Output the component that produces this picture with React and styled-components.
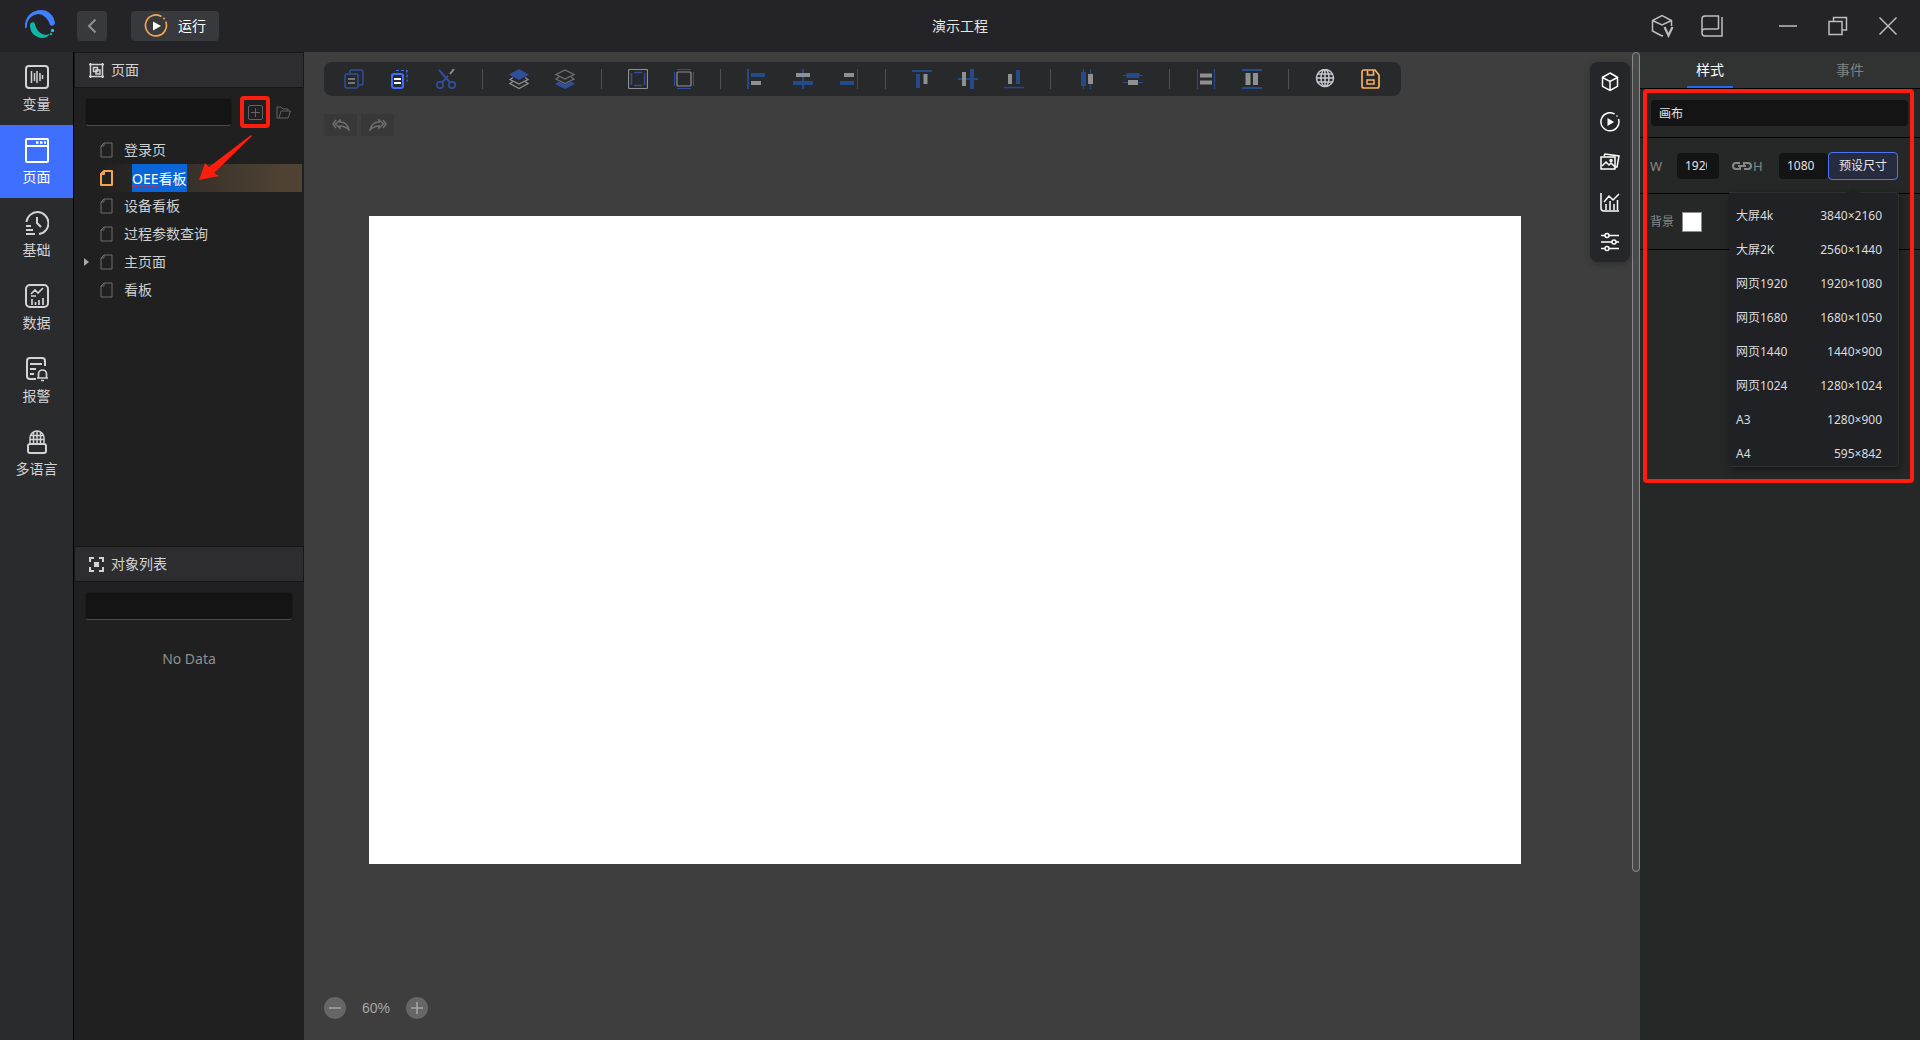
import React, { useState } from "react";
import styled, { createGlobalStyle, css } from "styled-components";

const GlobalStyle = createGlobalStyle`
  *, *::before, *::after { box-sizing: border-box; }
  html, body, #root { height: 100%; }
  body {
    margin: 0;
    background: #3e3e3e;
    color: #d6d6d6;
    font-family: "Noto Sans", "Noto Sans CJK SC", sans-serif;
    font-size: 14px;
    line-height: 20px;
    overflow: hidden;
  }
  button, input { font: inherit; color: inherit; margin: 0; padding: 0; border: 0; }
  button { background: none; cursor: pointer; }
  svg { display: block; flex: none; }
`;

/* ---------- shell ---------- */
const Shell = styled.div`
  display: flex;
  flex-direction: column;
  height: 100vh;
`;
const Header = styled.header`
  display: grid;
  grid-template-columns: 1fr auto 1fr;
  align-items: center;
  flex: none;
  height: 52px;
  padding: 0 16px;
  background: #242428;
`;
const HeaderStart = styled.div`
  display: flex;
  align-items: center;
  gap: 24px;
  padding-left: 8px;
  & > svg { margin-right: -3px; }
`;
const Title = styled.h1`
  margin: 0;
  font-size: 14px;
  font-weight: 400;
  color: #e4e4e4;
`;
const HeaderEnd = styled.div`
  display: flex;
  justify-content: flex-end;
  gap: 18px;
  color: #bdbdbf;
`;
const WindowButtons = styled.div`
  display: flex;
  gap: 18px;
  margin-left: 26px;
`;
const IconButton = styled.button`
  display: grid;
  place-items: center;
  width: 32px;
  height: 32px;
`;
const HeaderButton = styled.button`
  display: flex;
  align-items: center;
  justify-content: center;
  gap: 10px;
  height: 30px;
  min-width: 30px;
  padding: ${(p) => (p.$wide ? "0 13px" : "0")};
  border-radius: 4px;
  background: #38393d;
  color: ${(p) => (p.$wide ? "#fff" : "#8f8f91")};
`;
const Body = styled.div`
  display: flex;
  flex: 1;
  min-height: 0;
`;

/* ---------- left navigation ---------- */
const Nav = styled.nav`
  display: flex;
  flex-direction: column;
  flex: none;
  width: 74px;
  background: #2a2b2d;
  border-right: 1px solid #000;
`;
const NavItem = styled.button`
  display: flex;
  flex-direction: column;
  align-items: center;
  gap: 4px;
  height: 73px;
  padding-top: 13px;
  color: ${(p) => (p.$active ? "#fff" : "#d3d3d3")};
  background: ${(p) => (p.$active ? "#3f6fff" : "transparent")};
`;

/* ---------- side panel ---------- */
const Side = styled.aside`
  display: flex;
  flex-direction: column;
  flex: none;
  width: 230px;
  background: #202020;
`;
const SideSection = styled.section`
  display: flex;
  flex-direction: column;
  flex: ${(p) => (p.$grow ? "1" : "0 0 50%")};
`;
const SideTitle = styled.h2`
  display: flex;
  align-items: center;
  gap: 7px;
  flex: none;
  height: 36px;
  margin: 0;
  padding: 0 14px;
  border: 1px solid #171717;
  background: #2d2d2f;
  color: #d3d3d3;
  font-size: 14px;
  font-weight: 400;
`;
const SearchRow = styled.div`
  display: flex;
  align-items: center;
  gap: 8px;
  padding: 10px 11px 0;
`;
const SearchInput = styled.input`
  flex: 1;
  min-width: 0;
  height: 28px;
  padding: 0 8px;
  border: 1px solid #1b1b1b;
  border-bottom-color: #4a4a4a;
  border-radius: 4px;
  background: #141414;
  outline: none;
`;
const SmallButton = styled.button`
  display: grid;
  place-items: center;
  width: ${(p) => (p.$marked ? "30px" : "20px")};
  height: ${(p) => (p.$marked ? "32px" : "20px")};
  margin: ${(p) => (p.$marked ? "-2px -5px -2px 0" : "0")};
  border: ${(p) => (p.$marked ? "4px solid #ff1d0d" : "0")};
  border-radius: 4px;
  color: #626262;
`;
const Tree = styled.ul`
  position: relative;
  margin: 10px 0 0;
  padding: 0 2px 0 0;
  list-style: none;
`;
const TreeRow = styled.li`
  display: flex;
  align-items: center;
  gap: 11px;
  height: 28px;
  padding-left: 10px;
  ${(p) => p.$active && css`
    background: linear-gradient(90deg, #202020 10%, #4f4233 92%);
  `}
`;
const Caret = styled.span`
  width: 5px;
  height: 8px;
  background: ${(p) => (p.$shown ? "#a8a8a8" : "transparent")};
  clip-path: polygon(0 0, 100% 50%, 0 100%);
`;
const TreeLabel = styled.button`
  text-align: left;
  color: #cfcfcf;
`;
const TreeEdit = styled.input`
  width: 55px;
  height: 28px;
  margin-left: 8px;
  outline: none;
  color: #fff;
  background: #0a66d8;
`;
const EditWrap = styled.label`
  position: relative;
  display: flex;
  & > svg { position: absolute; left: 8px; bottom: 4px; }
`;
const Arrow = styled.svg`
  position: absolute;
  left: 123px;
  top: -1px;
  pointer-events: none;
`;
const Empty = styled.p`
  margin: 29px 0 0;
  text-align: center;
  color: #8e9094;
`;

/* ---------- stage ---------- */
const Stage = styled.main`
  display: flex;
  flex-direction: column;
  flex: 1;
  min-width: 0;
  position: relative;
  padding: 10px 0 21px 20px;
`;
const Toolbar = styled.div`
  display: flex;
  align-items: center;
  align-self: flex-start;
  flex: none;
  height: 34px;
  padding: 0 7px;
  border-radius: 8px;
  background: #28292b;
`;
const Tool = styled.button`
  display: grid;
  place-items: center;
  width: 46px;
  height: 34px;
`;
const Divider = styled.span`
  width: 1px;
  height: 20px;
  margin: 0 13px;
  background: #505153;
`;
const History = styled.div`
  display: flex;
  gap: 4px;
  flex: none;
  margin-top: 18px;
`;
const HistoryButton = styled.button`
  display: grid;
  place-items: center;
  width: 33px;
  height: 22px;
  background: #383838;
  color: #6e6e6e;
`;
const Viewport = styled.div`
  display: flex;
  flex: 1;
  min-height: 0;
  align-items: center;
  padding: 0 111px 0 45px;
  margin-bottom: 54px;
`;
const Canvas = styled.div`
  width: 100%;
  aspect-ratio: 16 / 9;
  background: #fff;
`;
const Zoom = styled.div`
  display: flex;
  align-items: center;
  gap: 16px;
  flex: none;
  color: #a6a6a6;
  font-family: "Liberation Sans", Arial, sans-serif;
`;
const ZoomButton = styled.button`
  display: grid;
  place-items: center;
  width: 22px;
  height: 22px;
  border-radius: 50%;
  background: #666;
`;
const Dock = styled.div`
  position: absolute;
  top: 10px;
  right: 2px;
  display: flex;
  flex-direction: column;
  border-radius: 8px;
  background: #25262a;
  color: #fff;
  box-shadow: 0 2px 6px rgba(0, 0, 0, 0.25);
`;
const DockButton = styled.button`
  display: grid;
  place-items: center;
  width: 40px;
  height: 40px;
`;
const Thumb = styled.div`
  flex: none;
  width: 8px;
  height: 83%;
  border: 1px solid #8a8a8a;
  border-radius: 4px;
  background: #4a4a4a;
`;

/* ---------- property panel ---------- */
const Props = styled.aside`
  position: relative;
  flex: none;
  width: 280px;
  background: #262827;
`;
const Tabs = styled.div`
  display: flex;
  height: 37px;
  background: #313332;
  border-bottom: 1px solid #000;
`;
const Tab = styled.button`
  display: flex;
  flex: 1;
  justify-content: center;
  align-items: stretch;
  color: ${(p) => (p.$active ? "#fff" : "#808281")};
  & > span {
    padding: 8px 9px 0;
    border-bottom: 2px solid ${(p) => (p.$active ? "#2468f2" : "transparent")};
  }
`;
const Group = styled.div`
  display: flex;
  align-items: center;
  height: ${(p) => (p.$first ? "49px" : "56px")};
  padding: ${(p) => (p.$first ? "0 12px 0 11px" : "0 22px 0 10px")};
  border-bottom: 1px solid #000;
  font-size: 12px;
  color: #858786;
`;
const Field = styled.input`
  flex: ${(p) => (p.$size ? "0 0 " + p.$size : "1")};
  min-width: 0;
  height: 26px;
  padding: 0 12px 0 8px;
  border-radius: 4px;
  background: #141414;
  color: #e2e2e2;
  outline: none;
`;
const Label = styled.label`
  flex: ${(p) => (p.$size ? "0 0 " + p.$size : "none")};
  display: flex;
  align-items: center;
  font-size: ${(p) => (p.$large ? "13px" : "12px")};
`;
const PresetWrap = styled.div`
  position: relative;
  flex: none;
  width: 70px;
`;
const PresetButton = styled.button`
  width: 100%;
  height: 28px;
  border: 1px solid #4a76f5;
  border-radius: 4px;
  background: #262b3f;
  color: #e6e6e6;
`;
const Menu = styled.ul`
  position: absolute;
  z-index: 1;
  top: 40px;
  right: -1px;
  display: grid;
  gap: 10px;
  width: 170px;
  margin: 0;
  padding: 11px 0 0;
  list-style: none;
  background: #202124;
  border: solid #2f3032;
  border-width: 1px 1px 1px 0;
  border-radius: 0 4px 4px 0;
  box-shadow: 2px 3px 8px rgba(0, 0, 0, 0.4);
  &::before {
    content: "";
    position: absolute;
    top: -5px;
    right: 38px;
    border: solid transparent;
    border-width: 0 7px 5px;
    border-bottom-color: #202124;
  }
`;
const MenuItem = styled.button`
  display: flex;
  justify-content: space-between;
  align-items: center;
  width: 100%;
  height: 24px;
  padding: 0 16px 0 7px;
  color: #dcdcdc;
  font-size: 12px;
`;
const Swatch = styled.input`
  appearance: none;
  width: 20px;
  height: 20px;
  border: 1px solid #8c8c8c;
  background: #fff;
  &::-webkit-color-swatch-wrapper { padding: 0; }
  &::-webkit-color-swatch { border: 0; }
`;
const Highlight = styled.div`
  position: absolute;
  z-index: 2;
  top: 37px;
  left: 3px;
  right: 6px;
  height: 394px;
  border: 4px solid #ff1d0d;
  border-radius: 4px;
  pointer-events: none;
`;

/* ---------- drawings ---------- */
const B = "#304e9c";
const D = "#254a8c";
const G = "#8f9090";

const Svg = ({ s = 24, w = s, h = s, sw = 2, children, ...rest }) => (
  <svg width={w} height={h} viewBox={`0 0 ${w} ${h}`} fill="none" stroke="currentColor" strokeWidth={sw} aria-hidden="true" {...rest}>
    {children}
  </svg>
);

const Logo = () => (
  <Svg s={32} strokeLinecap="round">
    <path d="M1 18C0 6 9 0 17 0c8 0 13 6 14 13a3 3 0 0 1-5 2C24 8 19 4 14 4 8 5 3 9 3 16c0 1-1 3-2 2z" fill="#3f80ff" stroke="none" />
    <path d="M6 15c0-3 4-4 5-1 1 6 5 10 11 11l4-1c-3 5-10 5-14 2-4-2-6-6-6-11z" fill="#11b5a4" stroke="none" />
    <circle cx="28.500" cy="20.500" r="1.700" fill="#2ac0d4" stroke="none" />
    <circle cx="27" cy="24" r="1.200" fill="#11b5a4" stroke="none" />
  </Svg>
);
const Run = () => (
  <Svg s={24}>
    <path d="M17.500 2.500A10.500 10.500 0 1 0 21.700 7.500" stroke="#f2a354" strokeWidth="1.700" />
    <path d="M9 7.500v9l8-4.500z" fill="#fff" stroke="none" />
    <circle cx="20" cy="4.500" r="1" fill="#f2a354" stroke="none" />
  </Svg>
);

const navIcons = {
  vars: (
    <>
      <rect x="1" y="1" width="22" height="22" rx="3" />
      <path d="M6.500 6v12M9.500 8v8M12 6v12M15 8v8M17.500 10v4" strokeWidth="1.500" />
    </>
  ),
  pages: (
    <>
      <rect x="1" y="1" width="22" height="23" rx="1" />
      <path d="M1 8h22" />
      <path d="M11 4.500h2.500M15 4.500h2.500M19 4.500h2" strokeWidth="2.500" />
    </>
  ),
  base: (
    <>
      <path d="M1.500 11A11 11 0 1 1 14 23M12 6v6l4 4" />
      <path d="M1 15h5M1 19h7M1 23h9" />
    </>
  ),
  data: (
    <>
      <rect x="1" y="1" width="22" height="22" rx="4" />
      <path d="M6 10l4-4 3 3 5-5M6 12h5M7 21v-6M10.500 21v-3M14 21v-5M18 21v-7" strokeWidth="1.700" />
    </>
  ),
  alarm: (
    <>
      <path d="M11 22H5a3 3 0 0 1-3-3V4a3 3 0 0 1 3-3h12a3 3 0 0 1 3 3v5M5 7h12M5 12h6M5 17h4" />
      <path d="M12 21h11M13.500 21v-4a4 4 0 0 1 8 0v4M16 23.500h3" strokeWidth="1.700" />
    </>
  ),
  lang: (
    <>
      <path d="M5 13V8a7 7 0 0 1 14 0v5M5 5.500h14M5 9.500h14M12 1v12M8.500 2v11M15.500 2v11" strokeWidth="1.500" />
      <rect x="3" y="14" width="18" height="9" rx="2" />
    </>
  ),
};

const PageFile = ({ active }) => (
  <Svg w={13} h={16} sw={active ? 2 : 1} color={active ? "#f2a354" : "#6f6f6f"} strokeLinejoin="round">
    <path d="M4 1h8v14H1V4zM4 1v3H1" />
  </Svg>
);

const tools = [
  [
    ["复制", <><path d="M6 5V3a2 2 0 0 1 2-2h9a2 2 0 0 1 2 2v11a2 2 0 0 1-2 2h-2" stroke={B} strokeWidth="1.500" /><rect x="1" y="5" width="13" height="14" rx="2" stroke={B} strokeWidth="1.500" /><path d="M4 10h7M4 14h7" stroke={G} strokeWidth="1.500" /></>],
    ["粘贴", <><path d="M6 1.500h11v11" stroke="#3f6fff" strokeDasharray="3 2" /><rect x="2" y="5" width="11" height="14" rx="2" stroke="#3f6fff" strokeWidth="2" /><path d="M4 10h7M4 14h7" stroke="#fff" strokeWidth="2" /></>],
    ["剪切", <><path d="M3 1l11 12.500" stroke={B} strokeWidth="2" /><path d="M14 5l4-5" stroke={G} strokeWidth="2" /><path d="M12 7L6 13.500" stroke={B} strokeWidth="2" /><circle cx="4" cy="16" r="3.200" stroke={B} strokeWidth="1.700" /><circle cx="16" cy="16" r="3.200" stroke={B} strokeWidth="1.700" /></>],
  ],
  [
    ["置于顶层", <><path d="M0 5.500L10 0l10 5.500L10 11z" fill={B} stroke="none" /><path d="M4 8.500L1 10.500l9 4.500 9-4.500-3-2M4 12.500l-3 2 9 5 9-5-3-2" stroke={G} /></>],
    ["置于底层", <><path d="M1 5.500L10 1l9 4.500-9 4.500zM4 8L1 10l9 4.500 9-4.500-3-2" stroke="#6f7071" /><path d="M0 15l4-2.500 6 3 6-3 4 2.500-10 5z" fill={B} stroke="none" /></>],
  ],
  [
    ["组合", <><rect x="0.500" y="0.500" width="19" height="19" rx="1" stroke={G} /><path d="M6 3.500h8M6 16.500h8M3.500 4v12M16.500 4v12" stroke={B} strokeWidth="1.500" /></>],
    ["取消组合", <><rect x="3" y="3" width="14" height="14" rx="1" stroke={G} /><path d="M3 .5h14M3 19.500h14M.5 3v14M19.500 3v14" stroke={B} /></>],
  ],
  [
    ["左对齐", <><path d="M1 0v20" stroke={D} strokeWidth="2" /><path d="M4 6h14" stroke={D} strokeWidth="4" /><path d="M4 14h10" stroke={G} strokeWidth="4" /></>],
    ["水平居中", <><path d="M10 0v20" stroke={D} strokeWidth="2" /><path d="M0 14h20" stroke={D} strokeWidth="4" /><path d="M3 6h14" stroke={G} strokeWidth="4" /></>],
    ["右对齐", <><path d="M18.500 0v20" stroke={D} strokeWidth="1" /><path d="M1 14h14" stroke={D} strokeWidth="4" /><path d="M5 6h10" stroke={G} strokeWidth="4" /></>],
  ],
  [
    ["顶对齐", <><path d="M0 2h20" stroke={D} strokeWidth="2" /><path d="M6 5v14" stroke={D} strokeWidth="4" /><path d="M13.500 5v10" stroke={G} strokeWidth="4" /></>],
    ["垂直居中", <><path d="M0 10h20" stroke={D} strokeWidth="2" /><path d="M14 0v20" stroke={D} strokeWidth="4" /><path d="M6 3v14" stroke={G} strokeWidth="4" /></>],
    ["底对齐", <><path d="M0 18.500h20" stroke={D} strokeWidth="1.500" /><path d="M14 1v14" stroke={D} strokeWidth="4" /><path d="M6 5v10" stroke={G} strokeWidth="4" /></>],
  ],
  [
    ["水平分布", <><path d="M6.500 0v20M13.500 0v20" stroke={D} /><path d="M6.500 3v14" stroke={D} strokeWidth="5" /><path d="M13.500 5v10" stroke={G} strokeWidth="5" /></>],
    ["垂直分布", <><path d="M0 6.500h20M0 13.500h20" stroke={D} /><path d="M3.500 6.500h13" stroke={D} strokeWidth="5" /><path d="M5 13.500h10" stroke={G} strokeWidth="5" /></>],
  ],
  [
    ["等宽", <><path d="M1.500 0v20M18.500 0v20" stroke={D} /><path d="M4 6.500h12M4 13.500h12" stroke={G} strokeWidth="4" /></>],
    ["等高", <><path d="M0 1h20M0 19h20" stroke={D} strokeWidth="2" /><path d="M6 4v12M13.500 4v12" stroke={G} strokeWidth="5" /></>],
  ],
  [
    ["语言", <g stroke="#c6c9d0" strokeWidth="1.500"><circle cx="10" cy="9" r="8.500" /><ellipse cx="10" cy="9" rx="4" ry="8.500" /><path d="M1.500 9h17M3 5h14M3 13h14M10 .5v17" /></g>],
    ["保存", <g stroke="#f7b064" strokeWidth="1.700"><path d="M3 1h11l4 5v11a2 2 0 0 1-2 2H3a2 2 0 0 1-2-2V3a2 2 0 0 1 2-2zM6.500 1v5h6V1" /><rect x="6" y="11" width="7" height="4" strokeWidth="1.500" /></g>],
  ],
];

const dock = [
  ["组件", <><path d="M10 1l7.500 4.300v9L10 18.500l-7.500-4.200v-9zM2.500 5.500L10 9.500l7.500-4M10 9.500v9" /></>],
  ["动画", <><path d="M14.500 2A9 9 0 1 0 18.500 7" /><circle cx="17" cy="4" r="0.800" fill="currentColor" stroke="none" /><path d="M7.500 6v8l6.500-4z" fill="currentColor" stroke="none" /></>],
  ["图片", <><rect x="1" y="5" width="14" height="12" /><path d="M4 4l1-2 14 2-2 11h-2M2 14l4-4 3 3 2-2 4 4" /><circle cx="11" cy="8.500" r="1" /></>],
  ["图表", <><path d="M1 1v15a3 3 0 0 0 3 3h15M6 18v-6M10 18V9M14 18v-6M17.500 18V8M4 10l5-6 4 4 6-6" /></>],
  ["设置", <><path d="M1 3.500h4M9 3.500h10M1 10h11M16 10h3M1 16.500h4M9 16.500h10" /><circle cx="7" cy="3.500" r="2" /><circle cx="14" cy="10" r="2" /><circle cx="7" cy="16.500" r="2" /></>],
];

const navItems = [
  ["vars", "变量"],
  ["pages", "页面"],
  ["base", "基础"],
  ["data", "数据"],
  ["alarm", "报警"],
  ["lang", "多语言"],
];
const pages = ["登录页", "OEE看板", "设备看板", "过程参数查询", "主页面", "看板"];
const presets = [
  ["大屏4k", "3840×2160"],
  ["大屏2K", "2560×1440"],
  ["网页1920", "1920×1080"],
  ["网页1680", "1680×1050"],
  ["网页1440", "1440×900"],
  ["网页1024", "1280×1024"],
  ["A3", "1280×900"],
  ["A4", "595×842"],
];

export default function App() {
  const [pageName, setPageName] = useState("OEE看板");
  return (
    <Shell>
      <GlobalStyle />
      <Header>
        <HeaderStart>
          <Logo />
          <HeaderButton aria-label="返回">
            <Svg w={10} h={16}><path d="M8.500 1.500L2 8l6.500 6.500" /></Svg>
          </HeaderButton>
          <HeaderButton $wide><Run />运行</HeaderButton>
        </HeaderStart>
        <Title>演示工程</Title>
        <HeaderEnd>
          <IconButton aria-label="版本">
            <Svg s={24} sw={1.500}>
              <path d="M12 22l-9.500-5V6.500L12 1.500l9.500 5V12M2.500 6.500L12 11l9.500-4.500M13 22l-1-.5" />
              <path d="M14.500 13l4 8.500 4-8.500" strokeWidth="2.200" />
            </Svg>
          </IconButton>
          <IconButton aria-label="手册">
            <Svg s={24} sw={1.500}><path d="M18.500 15V2H5a3 3 0 0 0-3 3v14a3 3 0 0 0 3 3h17V3M18.500 15H5a3 3 0 0 0-3 3" /></Svg>
          </IconButton>
          <WindowButtons>
            <IconButton aria-label="最小化"><Svg s={20} sw={1.500}><path d="M1 10h18" /></Svg></IconButton>
            <IconButton aria-label="还原"><Svg s={20} sw={1.500}><path d="M1 5.500h13v13H1zM5.500 5.500V1.500h13V14H14" /></Svg></IconButton>
            <IconButton aria-label="关闭"><Svg s={20} sw={1.500}><path d="M1.500 1.500l17 17M18.500 1.500l-17 17" /></Svg></IconButton>
          </WindowButtons>
        </HeaderEnd>
      </Header>
      <Body>
        <Nav>
          {navItems.map(([id, label]) => (
            <NavItem key={id} $active={id === "pages"}>
              <Svg w={24} h={25}>{navIcons[id]}</Svg>
              {label}
            </NavItem>
          ))}
        </Nav>
        <Side>
          <SideSection>
            <SideTitle>
              <Svg w={15} h={15} sw={1.500}>
                <path d="M1.500 0v15M13.500 0v15M0 1.500h15M0 13.500h15" />
                <rect x="4.500" y="4.500" width="4" height="4" /><rect x="7" y="7" width="4" height="4" />
              </Svg>
              页面
            </SideTitle>
            <SearchRow>
              <SearchInput aria-label="搜索页面" />
              <SmallButton $marked aria-label="新建页面">
                <Svg s={15} sw={1}><rect x="0.500" y="0.500" width="14" height="14" rx="1.500" /><path d="M7.500 3v9M3 7.500h9" /></Svg>
              </SmallButton>
              <SmallButton aria-label="新建文件夹">
                <Svg w={15} h={13} sw={1}><path d="M3 12H1V1h4l2 2h5v2M3 12l2-7h9.500L12 12z" /></Svg>
              </SmallButton>
            </SearchRow>
            <Tree>
              {pages.map((name, i) => (
                <TreeRow key={name} $active={i === 1}>
                  <Caret $shown={name === "主页面"} />
                  <PageFile active={i === 1} />
                  {i === 1 ? (
                    <EditWrap>
                      <TreeEdit aria-label="页面名称" value={pageName} onChange={(e) => setPageName(e.target.value)} />
                      <Svg w={28} h={4} sw={1}><path d="M0 3l2-2 2 2 2-2 2 2 2-2 2 2 2-2 2 2 2-2 2 2 2-2 2 2 2-2" stroke="#e8232a" /></Svg>
                    </EditWrap>
                  ) : (
                    <TreeLabel>{name}</TreeLabel>
                  )}
                </TreeRow>
              ))}
              <Arrow width="56" height="46" viewBox="0 0 56 46" aria-hidden="true">
                <path d="M54 0L12 32l-4-4L2 45l20-4-5-3L55 1z" fill="#ff1d0d" />
              </Arrow>
            </Tree>
          </SideSection>
          <SideSection $grow>
            <SideTitle>
              <Svg w={15} h={15}>
                <path d="M1 5V1h4M10 1h4v4M14 10v4h-4M5 14H1v-4" />
                <rect x="5" y="5" width="5" height="5" fill="currentColor" stroke="none" />
              </Svg>
              对象列表
            </SideTitle>
            <SearchRow><SearchInput aria-label="搜索对象" /></SearchRow>
            <Empty>No Data</Empty>
          </SideSection>
        </Side>
        <Stage>
          <Toolbar role="toolbar">
            {tools.map((group, gi) => (
              <React.Fragment key={gi}>
                {gi > 0 && <Divider />}
                {group.map(([label, art]) => (
                  <Tool key={label} aria-label={label}><Svg s={20} sw={1.200}>{art}</Svg></Tool>
                ))}
              </React.Fragment>
            ))}
          </Toolbar>
          <History>
            <HistoryButton aria-label="撤销">
              <Svg w={18} h={12} sw={1.500}><path d="M4 1L1 5l3 4M8 1L3.500 5 8 9V7c4 0 6 1 9 4-1-5-4-8-9-8z" /></Svg>
            </HistoryButton>
            <HistoryButton aria-label="重做">
              <Svg w={18} h={12} sw={1.500}><path d="M14 1l3 4-3 4M10 1l4.500 4L10 9V7c-4 0-6 1-9 4 1-5 4-8 9-8z" /></Svg>
            </HistoryButton>
          </History>
          <Viewport><Canvas /></Viewport>
          <Zoom>
            <ZoomButton aria-label="缩小"><Svg s={12} sw={1.500}><path d="M0 6h12" /></Svg></ZoomButton>
            <span>60%</span>
            <ZoomButton aria-label="放大"><Svg s={12} sw={1.500}><path d="M0 6h12M6 0v12" /></Svg></ZoomButton>
          </Zoom>
          <Dock>
            {dock.map(([label, art]) => (
              <DockButton key={label} aria-label={label}><Svg s={20} sw={1.500}>{art}</Svg></DockButton>
            ))}
          </Dock>
        </Stage>
        <Thumb />
        <Props>
          <Tabs>
            <Tab $active><span>样式</span></Tab>
            <Tab><span>事件</span></Tab>
          </Tabs>
          <Group $first><Field aria-label="名称" defaultValue="画布" /></Group>
          <Group>
            <Label htmlFor="w" $size="27px" $large>W</Label>
            <Field id="w" $size="42px" defaultValue="1920" />
            <Label htmlFor="h" $size="60px" $large>
              <Svg w={34} h={8} viewBox="-13 0 34 8" sw={2}>
                <path d="M8 1H4a3 3 0 0 0 0 6h4V5M12 3V1h4a3 3 0 0 1 0 6h-4M6 4h8" />
              </Svg>
              H
            </Label>
            <Field id="h" $size="49px" defaultValue="1080" />
            <PresetWrap>
              <PresetButton>预设尺寸</PresetButton>
              <Menu>
                {presets.map(([name, size]) => (
                  <li key={name}><MenuItem><span>{name}</span><span>{size}</span></MenuItem></li>
                ))}
              </Menu>
            </PresetWrap>
          </Group>
          <Group>
            <Label htmlFor="bg" $size="32px">背景</Label>
            <Swatch id="bg" type="color" defaultValue="#ffffff" />
          </Group>
          <Highlight />
        </Props>
      </Body>
    </Shell>
  );
}
